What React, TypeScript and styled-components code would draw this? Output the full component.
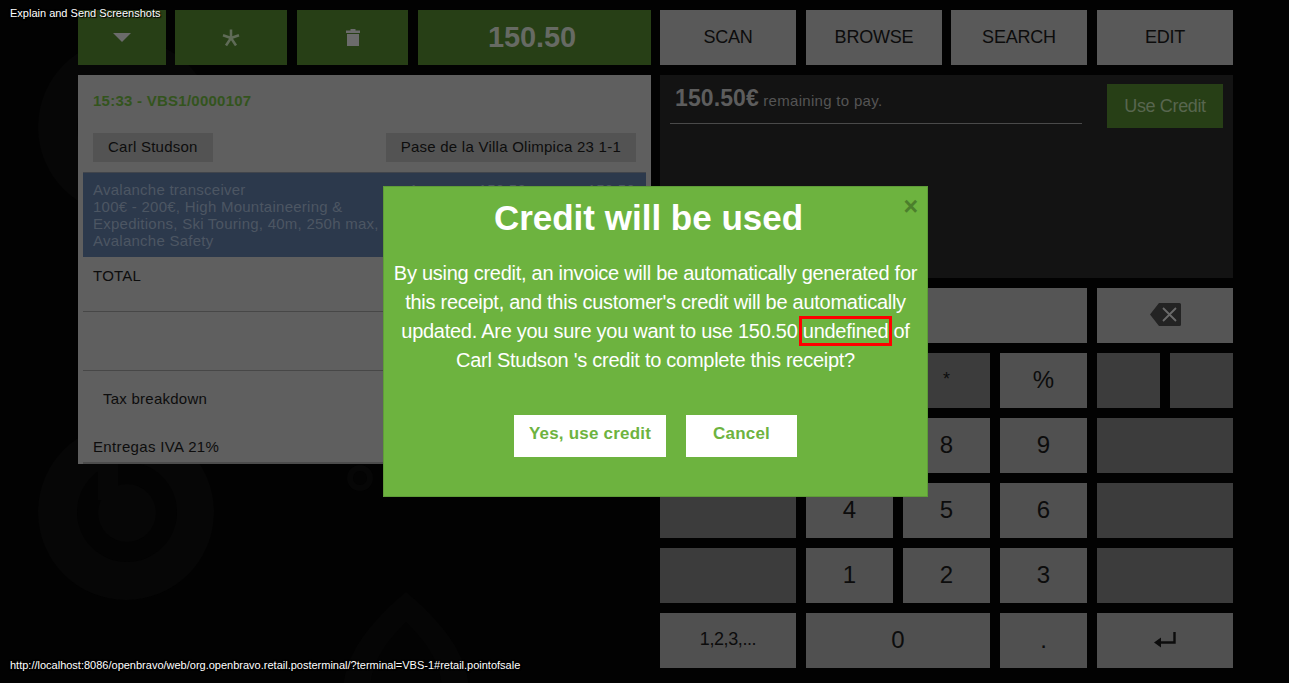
import React from "react";
import styled, { createGlobalStyle } from "styled-components";

const Global = createGlobalStyle`
  html, body { margin: 0; padding: 0; background: #000; height: 100%; overflow: hidden; }
  body { font-family: "Liberation Sans", Arial, sans-serif; }
`;

const Page = styled.div`
  position: relative;
  width: 1289px;
  height: 683px;
  box-sizing: border-box;
  padding: 10px 0 0 78px;
  display: grid;
  grid-template-columns: 573px 573px;
  column-gap: 9px;
  align-items: start;
  background: #020202;
  overflow: hidden;
`;

const Watermark = styled.svg`
  position: absolute;
  left: 0;
  top: 0;
  width: 1289px;
  height: 683px;
`;

const Column = styled.div`
  position: relative;
  display: flex;
  flex-direction: column;
  gap: 10px;
`;

const TopBar = styled.div`
  display: flex;
  gap: 10px;
  height: 55px;
`;

const GreenButton = styled.div<{ $w: number }>`
  width: ${(p) => p.$w}px;
  background: #273f16;
  color: #6b6b6b;
  display: flex;
  align-items: center;
  justify-content: center;
  &:first-child { margin-right: -1px; }
`;

const Amount = styled(GreenButton)`
  box-sizing: border-box;
  padding-right: 5px;
  color: #666a63;
  font-size: 29px;
  letter-spacing: -0.15px;
  font-weight: bold;
`;

const Ticket = styled.div`
  height: 389px;
  box-sizing: border-box;
  padding: 0 5px;
  background: #5f5f5f;
  color: #0d0d0d;
  font-size: 15px;
  letter-spacing: 0.25px;
  overflow: hidden;
`;

const TicketHeader = styled.div`
  height: 50px;
  padding: 0 10px;
  display: flex;
  align-items: center;
  font-size: 15px;
  font-weight: bold;
  color: #33541d;
`;

const CustomerRow = styled.div`
  display: flex;
  justify-content: space-between;
  padding: 8px 10px 10px;
`;

const Chip = styled.div`
  height: 29px;
  box-sizing: border-box;
  padding: 0 15px 2px;
  background: #535353;
  display: flex;
  align-items: center;
`;

const Line = styled.div`
  height: 85px;
  box-sizing: border-box;
  padding: 8px 10px 0;
  border-top: 1px solid #41454c;
  background: #2c394c;
  color: #4c5663;
  display: grid;
  grid-template-columns: 310px 15px 108px 109px;
  line-height: 17px;
`;

const Cell = styled.div`
  text-align: right;
`;

const Total = styled.div`
  height: 55px;
  box-sizing: border-box;
  padding: 10px 10px 0;
  border-bottom: 1px solid #474747;
`;

const EmptyRow = styled.div`
  height: 59px;
  box-sizing: border-box;
  border-bottom: 1px solid #474747;
`;

const TaxTitle = styled.div`
  height: 55px;
  padding-left: 20px;
  display: flex;
  align-items: center;
`;

const TaxRow = styled.div`
  height: 38px;
  box-sizing: border-box;
  padding: 4px 10px 0;
  border-bottom: 2px solid #4c4c4c;
  letter-spacing: 0.35px;
  display: flex;
  align-items: center;
`;

const Tools = styled.div`
  display: flex;
  gap: 10px;
  height: 55px;
`;

const Tool = styled.div`
  width: 136px;
  background: #595959;
  color: #0c0c0c;
  font-size: 18px;
  letter-spacing: -0.2px;
  display: flex;
  align-items: center;
  justify-content: center;
  &:nth-child(2) { margin-right: -1px; }
`;

const Payment = styled.div`
  height: 203px;
  box-sizing: border-box;
  background: #131313;
  display: grid;
  grid-template-columns: 412px 116px;
  justify-content: space-between;
  padding: 9px 10px 0;
  align-items: start;
`;

const PayLine = styled.div`
  height: 40px;
  box-sizing: border-box;
  border-bottom: 1px solid #4a4a4a;
  padding-left: 5px;
  color: #555;
  font-size: 15px;
  letter-spacing: 0.3px;
  line-height: 28px;
`;

const PayAmount = styled.b`
  font-size: 23px;
  letter-spacing: 0.1px;
  color: #5d5d5d;
`;

const UseCredit = styled.div`
  height: 44px;
  background: #273f16;
  color: #58664f;
  font-size: 18px;
  letter-spacing: -0.35px;
  display: flex;
  align-items: center;
  justify-content: center;
`;

const Keypad = styled.div`
  display: grid;
  grid-template-columns: 136px 87px 87px 87px 136px;
  grid-auto-rows: 55px;
  gap: 10px;
  width: 573px;
`;

const Key = styled.div<{ $span?: number; $dark?: boolean; $size?: number; $light?: boolean }>`
  grid-column: span ${(p) => p.$span ?? 1};
  box-sizing: border-box;
  padding-bottom: 2px;
  background: ${(p) => (p.$dark ? "#3c3c3c" : p.$light ? "#555" : "#505050")};
  color: #0c0c0c;
  font-size: ${(p) => p.$size ?? 24}px;
  display: flex;
  align-items: center;
  justify-content: center;
`;

const SmallKey = styled(Key)`
  letter-spacing: -0.4px;
`;

const SplitKey = styled.div`
  display: grid;
  grid-template-columns: 63px 63px;
  column-gap: 10px;
`;

const Dialog = styled.div`
  position: absolute;
  left: 383px;
  top: 186px;
  width: 545px;
  height: 311px;
  box-sizing: border-box;
  border: 1px solid #5f9c38;
  background: #6db33f;
  color: #fff;
  text-align: center;
  z-index: 3;
`;

const Close = styled.div`
  position: absolute;
  right: 9px;
  top: 7px;
  color: #4c7f2c;
  font-size: 25px;
  font-weight: bold;
  line-height: 25px;
`;

const Title = styled.h1`
  margin: 0;
  padding: 10px 14px 0 0;
  height: 59px;
  box-sizing: border-box;
  font-size: 35px;
  line-height: 42px;
  font-weight: bold;
`;

const Body = styled.div`
  padding: 13px 5px 0;
  font-size: 20px;
  letter-spacing: -0.27px;
  line-height: 29px;
`;

const Marked = styled.span`
  outline: 3px solid #f00;
  outline-offset: 1px;
`;

const Actions = styled.div`
  margin-top: 40px;
  display: flex;
  justify-content: flex-start;
  gap: 20px;
  padding-left: 130px;
`;

const DialogButton = styled.div<{ $w: number }>`
  width: ${(p) => p.$w}px;
  height: 42px;
  box-sizing: border-box;
  padding-top: 9px;
  background: #fff;
  color: #6db33f;
  font-size: 17px;
  letter-spacing: 0.2px;
  line-height: 20px;
  font-weight: bold;
`;

const Caption = styled.div<{ $bottom?: boolean }>`
  position: absolute;
  left: 10px;
  ${(p) => (p.$bottom ? "top: 658px;" : "top: 6px;")}
  color: #fff;
  font-size: 11px;
  line-height: 14px;
  text-shadow: 0 0 2px #000, 1px 1px 1px #000;
  z-index: 4;
`;

const IconBox = styled.svg`
  display: block;
`;

const Caret = () => (
  <IconBox width="18" height="9" viewBox="0 0 18 9">
    <path d="M0 0h18L9 9z" fill="currentColor" />
  </IconBox>
);
const Star = () => (
  <IconBox width="18" height="18" viewBox="0 0 18 18">
    <path
      d="M9 0.5v8.5M9 9L1 6.3M9 9l8-2.7M9 9L4 16.5M9 9l5 7.5"
      stroke="#5f6b57"
      strokeWidth="2.5"
      fill="none"
    />
  </IconBox>
);
const Trash = () => (
  <IconBox width="14" height="17" viewBox="0 0 14 17">
    <path d="M0 1.5h14V4H0zM4.5 0h5v2h-5zM1 5h12v12H1z" fill="currentColor" />
  </IconBox>
);
const BackspaceIcon = () => (
  <IconBox width="31" height="23" viewBox="0 0 31 23">
    <path d="M9 0h20.5a1.5 1.5 0 0 1 1.5 1.5v20a1.5 1.5 0 0 1-1.5 1.5H9L0 11.5z" fill="#232323" />
    <path d="M13 5l13 13M26 5L13 18" stroke="#6a6a6a" strokeWidth="1.8" fill="none" />
  </IconBox>
);
const EnterIcon = () => (
  <IconBox width="22" height="16" viewBox="0 0 22 16">
    <path d="M20.5 0v10.5H3" stroke="#0c0c0c" strokeWidth="2.4" fill="none" />
    <path d="M0 10.5L7 5.5v10z" fill="#0c0c0c" />
  </IconBox>
);

export default function App() {
  return (
    <Page>
      <Global />
      <Watermark viewBox="0 0 1289 683">
        <circle cx="126" cy="127" r="88" fill="#060606" />
        <circle cx="127" cy="127" r="50" fill="#030303" />
        <circle cx="126" cy="512" r="88" fill="#060606" />
        <circle cx="127" cy="512" r="50" fill="#030303" />
        <circle cx="127" cy="513" r="29" fill="#060606" />
        <path d="M98 450h20v50H98z" fill="#060606" />
        <circle cx="360" cy="478" r="13" fill="#060606" />
        <circle cx="360" cy="478" r="7" fill="#030303" />
        <path d="M406 592c30 25 63 60 63 100H343c0-40 33-75 63-100z" fill="#050505" />
        <path d="M406 622c18 18 36 40 36 70h-72c0-30 18-52 36-70z" fill="#030303" />
      </Watermark>

      <Column>
        <TopBar>
          <GreenButton $w={88}><Caret /></GreenButton>
          <GreenButton $w={112}><Star /></GreenButton>
          <GreenButton $w={111}><Trash /></GreenButton>
          <Amount $w={233}>150.50</Amount>
        </TopBar>
        <Ticket>
          <TicketHeader>15:33 - VBS1/0000107</TicketHeader>
          <CustomerRow>
            <Chip>Carl Studson</Chip>
            <Chip>Pase de la Villa Olimpica 23 1-1</Chip>
          </CustomerRow>
          <Line>
            <div>
              Avalanche transceiver
              <br />
              100€ - 200€, High Mountaineering &amp; Expeditions, Ski Touring, 40m, 250h max, Avalanche Safety
            </div>
            <Cell>1</Cell>
            <Cell>150.50</Cell>
            <Cell>150.50</Cell>
          </Line>
          <Total>TOTAL</Total>
          <EmptyRow />
          <TaxTitle>Tax breakdown</TaxTitle>
          <TaxRow>Entregas IVA 21%</TaxRow>
        </Ticket>
      </Column>

      <Column>
        <Tools>
          <Tool>SCAN</Tool>
          <Tool>BROWSE</Tool>
          <Tool>SEARCH</Tool>
          <Tool>EDIT</Tool>
        </Tools>
        <Payment>
          <PayLine>
            <PayAmount>150.50€</PayAmount> remaining to pay.
          </PayLine>
          <UseCredit>Use Credit</UseCredit>
        </Payment>
        <Keypad>
          <Key $span={4} $light />
          <Key $light><BackspaceIcon /></Key>

          <Key $dark />
          <Key $dark>/</Key>
          <Key $dark $size={18}>*</Key>
          <Key>%</Key>
          <SplitKey>
            <Key $dark />
            <Key $dark />
          </SplitKey>

          <Key $dark />
          <Key>7</Key>
          <Key>8</Key>
          <Key>9</Key>
          <Key $dark />

          <Key $dark />
          <Key>4</Key>
          <Key>5</Key>
          <Key>6</Key>
          <Key $dark />

          <Key $dark />
          <Key>1</Key>
          <Key>2</Key>
          <Key>3</Key>
          <Key $dark />

          <SmallKey $size={18}>1,2,3,...</SmallKey>
          <Key $span={2}>0</Key>
          <Key>.</Key>
          <Key><EnterIcon /></Key>
        </Keypad>
      </Column>

      <Dialog>
        <Close>×</Close>
        <Title>Credit will be used</Title>
        <Body>
          By using credit, an invoice will be automatically generated for this receipt, and this
          customer's credit will be automatically updated. Are you sure you want to use 150.50{" "}
          <Marked>undefined</Marked> of Carl Studson 's credit to complete this receipt?
        </Body>
        <Actions>
          <DialogButton $w={152}>Yes, use credit</DialogButton>
          <DialogButton $w={111}>Cancel</DialogButton>
        </Actions>
      </Dialog>

      <Caption>Explain and Send Screenshots</Caption>
      <Caption $bottom>
        http://localhost:8086/openbravo/web/org.openbravo.retail.posterminal/?terminal=VBS-1#retail.pointofsale
      </Caption>
    </Page>
  );
}
